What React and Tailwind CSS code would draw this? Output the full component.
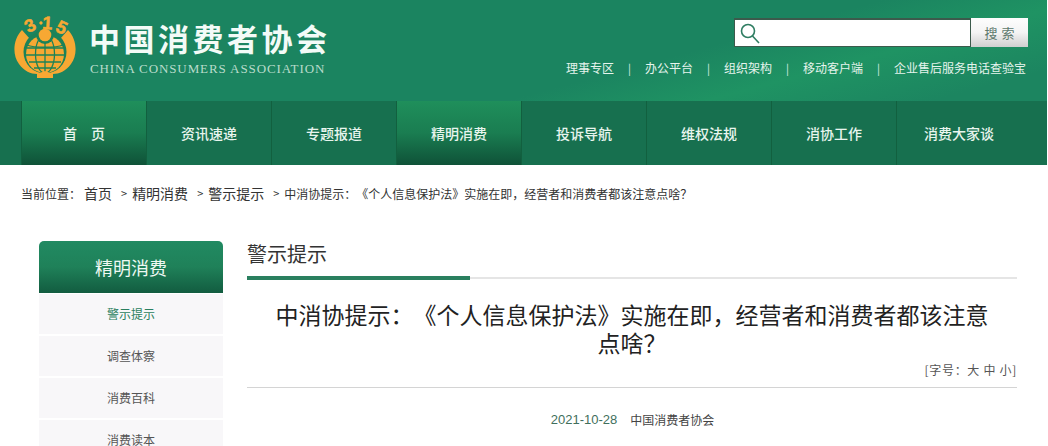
import React from "react";

const cjk = { fontFamily: '"Noto Sans CJK SC", "Noto Sans", sans-serif' };

function Logo() {
  const o = "#f7a833";
  const g = "#1c8258";
  return (
    <svg width="63" height="65" viewBox="0 0 63 65" className="shrink-0">
      <path d="M8 16 C-1 25 -2 41 5 50 C10 57 17 60 23 60 L23 64 L39 64 L39 60 C45 60 52 57 57 50 C64 41 63 25 54 16 L31 42 Z" fill={o} />
      <circle cx="31" cy="38" r="21.5" fill={g} />
      <circle cx="31" cy="40" r="19" fill={o} />
      <g fill="none" stroke={g} strokeWidth="1.3">
        <ellipse cx="31" cy="40" rx="9.5" ry="19" />
        <path d="M31 21V59M13 34H49M12 41H50M15 48H47M20 54H42" />
        <path d="M13 31 C20 34 42 34 49 31" />
      </g>
      <path d="M31 57 L23 60 L39 60 Z" fill={o} />
      <circle cx="31" cy="21" r="9" fill={g} />
      <circle cx="31" cy="21" r="6.3" fill={o} />
      <g fill={o} stroke={o} strokeWidth="0.5" fontSize="18" fontWeight="700" textAnchor="middle" style={{ fontFamily: '"Liberation Sans", sans-serif' }}>
        <text transform="translate(19 17) rotate(-28)">3</text>
        <circle cx="27" cy="9" r="1.4" />
        <text transform="translate(33 15) rotate(4)">1</text>
        <text transform="translate(45 19) rotate(26)">5</text>
      </g>
    </svg>
  );
}

function NavItem({ label, active }) {
  return (
    <a
      className={`flex h-full w-[125px] items-center justify-center border-l border-[#12603f] text-[14px] font-medium text-[#e8f5ee] ${
        active ? "bg-gradient-to-b from-[#1f8f5b] via-[#1a7d51] to-[#0f5238]" : ""
      }`}
    >
      {label}
    </a>
  );
}

function SideItem({ label, active }) {
  return (
    <div
      className={`flex h-[40px] items-center justify-center bg-[#f8f7f9] text-[12px] ${
        active ? "text-[#2a7f5f]" : "text-[#555555]"
      }`}
    >
      {label}
    </div>
  );
}

function Sep() {
  return <span className="mx-[14px] text-[11px] text-[#d9eee4]">|</span>;
}

function Crumb() {
  return <span className="ml-[9px] mr-[5px] text-[11px] text-[#333333]">&gt;</span>;
}

export default function App() {
  return (
    <div className="h-[446px] w-[1048px] overflow-hidden bg-white [text-spacing-trim:space-all]" style={cjk}>
      <header className="flex h-[101px] w-[1047px] justify-between bg-[linear-gradient(165deg,#1b8460_0%,#1b8460_62%,#1f9363_76%,#1c8560_92%)] pl-[14px] pr-[21px]">
        <div className="flex items-start pt-[14px]">
          <Logo />
          <div className="ml-[12px] pt-[5px]">
            <div className="text-[31px] font-bold leading-[38px] tracking-[3.5px] text-[#f3fbf7]">中国消费者协会</div>
            <div
              className="ml-[1px] mt-[4px] text-[13px] leading-[15px] tracking-[0.9px] text-[#b9dccb]"
              style={{ fontFamily: '"Liberation Serif", serif' }}
            >
              CHINA CONSUMERS ASSOCIATION
            </div>
          </div>
        </div>
        <div className="flex flex-col items-end pt-[18px]">
          <div className="mr-[-2px] flex h-[29px] w-[294px]">
            <div className="flex flex-1 items-center border border-t-2 border-[#3c5a4c] bg-white pl-[4px]">
              <svg width="22" height="22" viewBox="0 0 22 22" fill="none" stroke="#2f7d62" strokeWidth="1.6">
                <circle cx="9" cy="9" r="6.5" />
                <path d="M13.5 14 L20 21" />
              </svg>
            </div>
            <div className="flex w-[57px] items-center justify-center bg-gradient-to-b from-[#fdfdfd] via-[#f4f4f4] to-[#cfcfcf] pl-[4px] text-[13px] tracking-[4px] text-[#5e7a6e]">
              搜索
            </div>
          </div>
          <div className="mt-[12px] flex items-center text-[12px] leading-[18px] text-[#e6f4ed]">
            <span>理事专区</span>
            <Sep />
            <span>办公平台</span>
            <Sep />
            <span>组织架构</span>
            <Sep />
            <span>移动客户端</span>
            <Sep />
            <span>企业售后服务电话查验宝</span>
          </div>
        </div>
      </header>

      <nav className="flex h-[64px] w-[1047px] bg-[#17704f] pl-[21px]">
        <NavItem label="首　页" active />
        <NavItem label="资讯速递" />
        <NavItem label="专题报道" />
        <NavItem label="精明消费" active />
        <NavItem label="投诉导航" />
        <NavItem label="维权法规" />
        <NavItem label="消协工作" />
        <NavItem label="消费大家谈" />
      </nav>

      <div className="flex h-[58px] items-center pb-[1px] pl-[21px] text-[12px] text-[#333333]">
        <span className="whitespace-nowrap">当前位置：</span>
        <span className="ml-[3px] text-[14px]">首页</span>
        <Crumb />
        <span className="text-[14px]">精明消费</span>
        <Crumb />
        <span className="text-[14px]">警示提示</span>
        <Crumb />
        <span className="whitespace-nowrap">中消协提示：《个人信息保护法》实施在即，经营者和消费者都该注意点啥？</span>
      </div>

      <div className="mt-[18px] flex items-start pl-[39px]">
        <aside className="w-[184px]">
          <div className="flex h-[52px] items-center justify-center rounded-t-[5px] bg-gradient-to-b from-[#218a62] via-[#1f8159] to-[#125c40] text-[18px] text-[#eef8f3]">
            精明消费
          </div>
          <div className="mt-[1px] flex flex-col gap-[2px]">
            <SideItem label="警示提示" active />
            <SideItem label="调查体察" />
            <SideItem label="消费百科" />
            <SideItem label="消费读本" />
          </div>
        </aside>

        <main className="ml-[24px] w-[770px]">
          <div className="h-[36px] text-[20px] leading-[26px] text-[#333333]">警示提示</div>
          <div className="relative h-[2px] bg-[#e5e5e5]">
            <div className="absolute left-0 top-[-1px] h-[4px] w-[223px] bg-[#2a7f5f]" />
          </div>
          <h1 className="mx-auto mt-[21px] w-[730px] text-center text-[23px] font-normal leading-[28px] text-[#222222]">
            中消协提示：《个人信息保护法》实施在即，经营者和消费者都该注意点啥？
          </h1>
          <div className="mt-[5px] text-right text-[12px] leading-[18px] tracking-[0.7px] text-[#555555]">[字号：大 中 小]</div>
          <div className="mt-[8px] h-px bg-[#d4d4d4]" />
          <div className="mt-[23px] flex justify-center pl-[1px] text-[12px] leading-[18px]">
            <span className="text-[13px] text-[#3f6f5c]" style={{ fontFamily: '"Liberation Sans", sans-serif' }}>2021-10-28</span>
            <span className="ml-[13px] text-[#444444]">中国消费者协会</span>
          </div>
        </main>
      </div>
    </div>
  );
}
